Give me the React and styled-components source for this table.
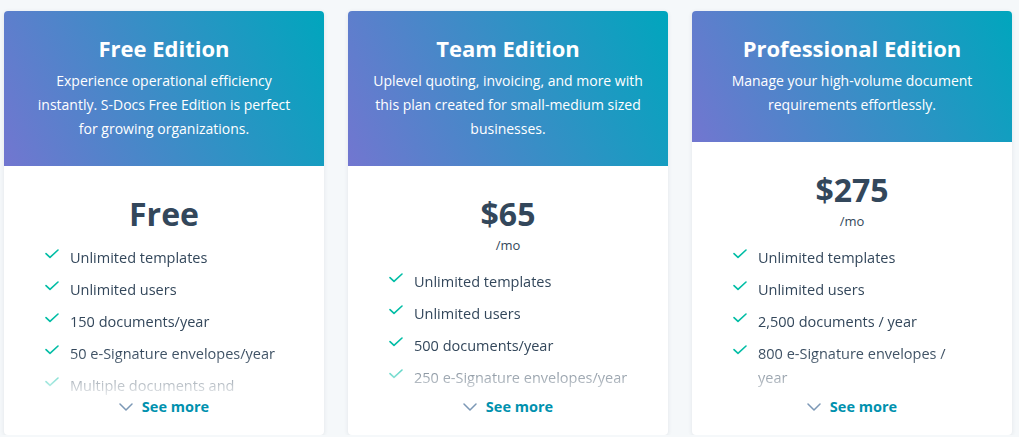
import React from "react";
import styled, { createGlobalStyle } from "styled-components";

const GlobalStyle = createGlobalStyle`
  html, body {
    margin: 0;
    padding: 0;
    background: #f5f8fa;
    font-family: "Open Sans", "Noto Sans", Arial, sans-serif;
    color: #33475b;
  }
`;

const plans = [
  {
    title: "Free Edition",
    description:
      "Experience operational efficiency instantly. S-Docs Free Edition is perfect for growing organizations.",
    price: "Free",
    features: [
      "Unlimited templates",
      "Unlimited users",
      "150 documents/year",
      "50 e-Signature envelopes/year",
      "Multiple documents and templates in one package",
    ],
  },
  {
    title: "Team Edition",
    description:
      "Uplevel quoting, invoicing, and more with this plan created for small-medium sized businesses.",
    price: "$65",
    per: "/mo",
    features: [
      "Unlimited templates",
      "Unlimited users",
      "500 documents/year",
      "250 e-Signature envelopes/year",
      "Send documents via email",
    ],
  },
  {
    title: "Professional Edition",
    description: "Manage your high-volume document requirements effortlessly.",
    price: "$275",
    per: "/mo",
    features: [
      "Unlimited templates",
      "Unlimited users",
      "2,500 documents / year",
      "800 e-Signature envelopes / year",
      "Advanced template features",
    ],
  },
];

function Check() {
  return (
    <svg width="14" height="10" viewBox="0 0 14 10" fill="none">
      <path
        d="M1 4.6 L5 8.4 L13 1"
        stroke="#00bda5"
        strokeWidth="1.6"
        strokeLinecap="round"
        strokeLinejoin="round"
      />
    </svg>
  );
}

function Chevron() {
  return (
    <svg width="14" height="8" viewBox="0 0 14 8" fill="none">
      <path
        d="M1 1 L7 7 L13 1"
        stroke="#7c98b6"
        strokeWidth="1.5"
        strokeLinecap="round"
        strokeLinejoin="round"
      />
    </svg>
  );
}

export default function App() {
  return (
    <>
      <GlobalStyle />
      <Page>
        {plans.map((plan) => (
          <Card key={plan.title}>
            <Header>
              <h3>{plan.title}</h3>
              <p>{plan.description}</p>
            </Header>
            <Body>
              <Price>{plan.price}</Price>
              {plan.per && <Per>{plan.per}</Per>}
              <Features>
                {plan.features.map((f) => (
                  <Feature key={f}>
                    <span className="icon">
                      <Check />
                    </span>
                    <span>{f}</span>
                  </Feature>
                ))}
              </Features>
              <SeeMore>
                <Chevron />
                <span>See more</span>
              </SeeMore>
            </Body>
          </Card>
        ))}
      </Page>
    </>
  );
}

const Page = styled.div`
  display: grid;
  grid-template-columns: repeat(3, 320px);
  column-gap: 24px;
  padding: 11px 0 0 4px;
  align-items: start;
`;

const Card = styled.div`
  display: flex;
  flex-direction: column;
  height: 424px;
  background: #fff;
  border-radius: 4px;
  overflow: hidden;
  box-shadow: 0 1px 4px rgba(45, 62, 80, 0.1);
`;

const Header = styled.div`
  background: linear-gradient(65deg, #7276d0 0%, #3f8bc7 45%, #00a6bd 100%);
  color: #fff;
  text-align: center;
  padding: 22px 20px 25px;

  h3 {
    margin: 0;
    font-size: 22px;
    line-height: 30px;
    font-weight: 700;
  }

  p {
    max-width: 271px;
    margin: 6px auto 0;
    font-size: 14px;
    line-height: 24px;
  }
`;

const Body = styled.div`
  flex: 1;
  display: flex;
  flex-direction: column;
  min-height: 0;
  padding: 28px 40px 16px;
`;

const Price = styled.div`
  text-align: center;
  font-size: 32px;
  line-height: 40px;
  font-weight: 700;
  color: #33475b;
`;

const Per = styled.div`
  text-align: center;
  font-size: 13px;
  line-height: 20px;
  margin: 1px 0 3px;
  color: #33475b;
`;

const Features = styled.ul`
  flex: 1;
  min-height: 0;
  overflow: hidden;
  list-style: none;
  margin: 12px 0 0;
  padding: 0;
  -webkit-mask-image: linear-gradient(to bottom, #000 calc(100% - 44px), rgba(0, 0, 0, 0.12) 100%);
  mask-image: linear-gradient(to bottom, #000 calc(100% - 44px), rgba(0, 0, 0, 0.12) 100%);
`;

const Feature = styled.li`
  display: grid;
  grid-template-columns: 26px 1fr;
  font-size: 14.5px;
  line-height: 24px;
  margin-bottom: 8px;
  color: #33475b;

  .icon {
    display: flex;
    padding-top: 3px;
    padding-left: 1px;
  }
`;

const SeeMore = styled.div`
  display: flex;
  justify-content: center;
  align-items: center;
  gap: 9px;
  line-height: 24px;
  font-size: 14.5px;
  font-weight: 700;
  color: #0091ae;
`;
